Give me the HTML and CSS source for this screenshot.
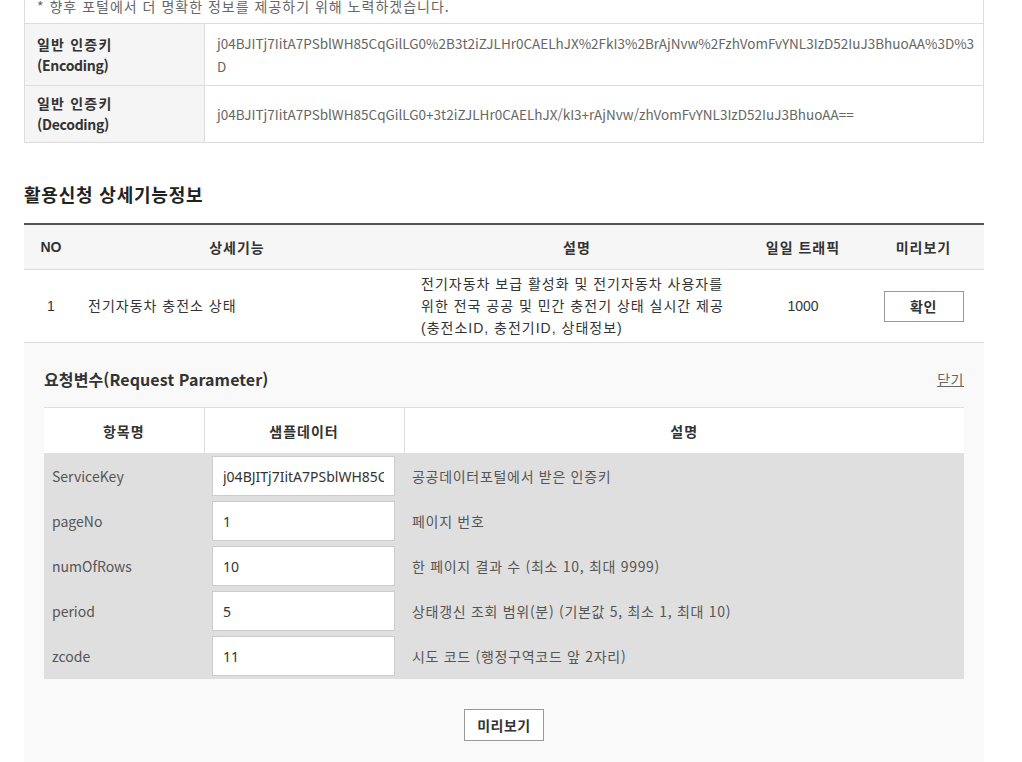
FILE: index.html
```html
<!DOCTYPE html>
<html lang="ko">
<head>
<meta charset="utf-8">
<title>활용신청 상세기능정보</title>
<link rel="stylesheet" href="styles.css">
</head>
<body>
<div class="page">
  <div class="notice">* 향후 포털에서 더 명확한 정보를 제공하기 위해 노력하겠습니다.</div>
  <table class="keys">
    <colgroup><col class="k-label"><col></colgroup>
    <tr>
      <th>일반 인증키<br><span class="en">(Encoding)</span></th>
      <td class="enc"><span>j04BJITj7IitA7PSblWH85CqGilLG0%2B3t2iZJLHr0CAELhJX%2FkI3%2BrAjNvw%2FzhVomFvYNL3IzD52IuJ3BhuoAA%3D%3</span><span>D</span></td>
    </tr>
    <tr>
      <th>일반 인증키<br><span class="en">(Decoding)</span></th>
      <td>j04BJITj7IitA7PSblWH85CqGilLG0+3t2iZJLHr0CAELhJX/kI3+rAjNvw/zhVomFvYNL3IzD52IuJ3BhuoAA==</td>
    </tr>
  </table>

  <h2 class="sec-title">활용신청 상세기능정보</h2>

  <table class="detail">
    <colgroup>
      <col class="c-no"><col class="c-func"><col class="c-desc"><col class="c-traffic"><col class="c-prev">
    </colgroup>
    <thead>
      <tr>
        <th class="no">NO</th>
        <th>상세기능</th>
        <th class="desc">설명</th>
        <th>일일 트래픽</th>
        <th>미리보기</th>
      </tr>
    </thead>
    <tbody>
      <tr>
        <td class="no">1</td>
        <td class="func">전기자동차 충전소 상태</td>
        <td class="desc">전기자동차 보급 활성화 및 전기자동차 사용자를 위한 전국 공공 및 민간 충전기 상태 실시간 제공 (충전소ID, 충전기ID, 상태정보)</td>
        <td class="num">1000</td>
        <td class="num"><button class="btn btn-check" type="button">확인</button></td>
      </tr>
    </tbody>
  </table>

  <section class="panel">
    <div class="panel-head">
      <h3 class="panel-title">요청변수(Request Parameter)</h3>
      <a class="close" href="#">닫기</a>
    </div>
    <table class="params">
      <colgroup><col class="p-name"><col class="p-sample"><col></colgroup>
      <thead>
        <tr><th>항목명</th><th>샘플데이터</th><th>설명</th></tr>
      </thead>
      <tbody>
        <tr><td>ServiceKey</td><td><input class="field" type="text" value="j04BJITj7IitA7PSblWH85CqGilLG0+3t2iZJLHr0CAELhJX/kI3+rAjNvw/zhVomFvYNL3IzD52IuJ3BhuoAA=="></td><td class="pdesc">공공데이터포털에서 받은 인증키</td></tr>
        <tr><td>pageNo</td><td><input class="field" type="text" value="1"></td><td class="pdesc">페이지 번호</td></tr>
        <tr><td>numOfRows</td><td><input class="field" type="text" value="10"></td><td class="pdesc">한 페이지 결과 수 (최소 10, 최대 9999)</td></tr>
        <tr><td>period</td><td><input class="field" type="text" value="5"></td><td class="pdesc">상태갱신 조회 범위(분) (기본값 5, 최소 1, 최대 10)</td></tr>
        <tr class="last"><td>zcode</td><td><input class="field" type="text" value="11"></td><td class="pdesc">시도 코드 (행정구역코드 앞 2자리)</td></tr>
      </tbody>
    </table>
    <div class="actions">
      <button class="btn btn-preview" type="button">미리보기</button>
    </div>
  </section>
</div>
</body>
</html>
```

FILE: styles.css
```css
html, body {
  margin: 0;
  padding: 0;
  background: #fff;
}

body {
  font-family: "Noto Sans CJK KR", "Noto Sans", sans-serif;
  font-size: 14px;
  color: #333;
  overflow: hidden;
}

.page {
  width: 960px;
  margin: -12px 0 0 24px;
}

.notice {
  border: 1px solid #ddd;
  border-bottom: 0;
  padding: 7px 12px;
  line-height: 20px;
  color: #666;
  font-size: 14px;
  letter-spacing: 1px;
}

table {
  border-collapse: collapse;
  border-spacing: 0;
  table-layout: fixed;
  width: 100%;
}

/* key table */
.keys {
  border: 1px solid #ddd;
}
.keys .k-label { width: 180px; }
.keys tr { border-top: 1px solid #ddd; }
.keys th {
  background: #f5f5f5;
  text-align: left;
  font-weight: bold;
  padding: 7px 12px;
  line-height: 21px;
  color: #333;
  letter-spacing: 1.2px;
  border-right: 1px solid #ddd;
  vertical-align: middle;
}
.keys th .en { letter-spacing: -0.3px; }
.keys td {
  padding: 8px 12px 7px;
  line-height: 23px;
  color: #666;
  font-size: 13.5px;
  white-space: nowrap;
  vertical-align: middle;
}
.keys td.enc span { display: block; }

.sec-title {
  margin: 38px 0 16px;
  font-size: 18px;
  line-height: 26px;
  font-weight: bold;
  color: #222;
  letter-spacing: 0.8px;
}

/* detail table */
.detail {
  font-family: "Liberation Sans", "Noto Sans CJK KR", sans-serif;
  border-top: 2px solid #555;
  color: #333;
  letter-spacing: 1px;
}
.detail .c-no { width: 54px; }
.detail .c-func { width: 318px; }
.detail .c-desc { width: 347px; }
.detail .c-traffic { width: 120px; }
.detail .c-prev { width: 121px; }

.detail thead th {
  background: #f6f6f6;
  height: 44px;
  padding: 0;
  text-align: center;
  font-weight: bold;
  border-bottom: 1px solid #ddd;
}
.detail thead th.no { letter-spacing: 0; }
.detail thead th.desc { padding: 0 10px 0 25px; }
.detail tbody td {
  padding: 3px 0;
  line-height: 22px;
  border-bottom: 1px solid #ddd;
  vertical-align: middle;
}
.detail td.no { text-align: center; letter-spacing: 0; }
.detail td.func { padding-left: 10px; }
.detail td.desc { padding: 3px 10px 3px 25px; }
.detail td.num { text-align: center; letter-spacing: 0; }

.btn {
  font-family: "Noto Sans CJK KR", sans-serif;
  font-size: 14px;
  font-weight: bold;
  color: #333;
  background: #fff;
  border: 1px solid #999;
  padding: 0;
  letter-spacing: 0.5px;
  cursor: pointer;
}
.btn-check {
  width: 80px;
  height: 31px;
}

/* request parameter panel */
.panel {
  background: #f9f9f9;
  padding: 25px 20px 40px;
}
.panel-head {
  display: flex;
  justify-content: space-between;
  align-items: center;
  height: 22px;
  margin-bottom: 17px;
}
.panel-title {
  margin: 0;
  font-size: 16px;
  font-weight: bold;
  color: #333;
  letter-spacing: 0.1px;
}
.close {
  color: #666;
  font-size: 14px;
  letter-spacing: 0.5px;
  text-decoration: underline;
}

.params {
  border-top: 1px solid #ddd;
}
.params .p-name { width: 160px; }
.params .p-sample { width: 200px; }
.params thead th {
  background: #fff;
  height: 45px;
  padding: 0;
  font-weight: bold;
  color: #333;
  text-align: center;
  letter-spacing: 1px;
  border-left: 1px solid #ddd;
}
.params thead th:first-child { border-left: 0; }
.params tbody td {
  background: #dfdfdf;
  padding: 3px 8px 2px;
  color: #555;
  vertical-align: middle;
}
.params tbody td.pdesc { letter-spacing: 0.7px; }
.params tbody tr.last td { padding-bottom: 3px; }

.field {
  box-sizing: border-box;
  width: 183px;
  height: 40px;
  border: 1px solid #ccc;
  background: #fff;
  padding: 0 10px;
  font-family: "Noto Sans", "Noto Sans CJK KR", sans-serif;
  font-size: 14px;
  color: #333;
  display: block;
}

.actions {
  display: flex;
  justify-content: center;
  margin-top: 30px;
}
.btn-preview {
  width: 80px;
  height: 32px;
}
```
